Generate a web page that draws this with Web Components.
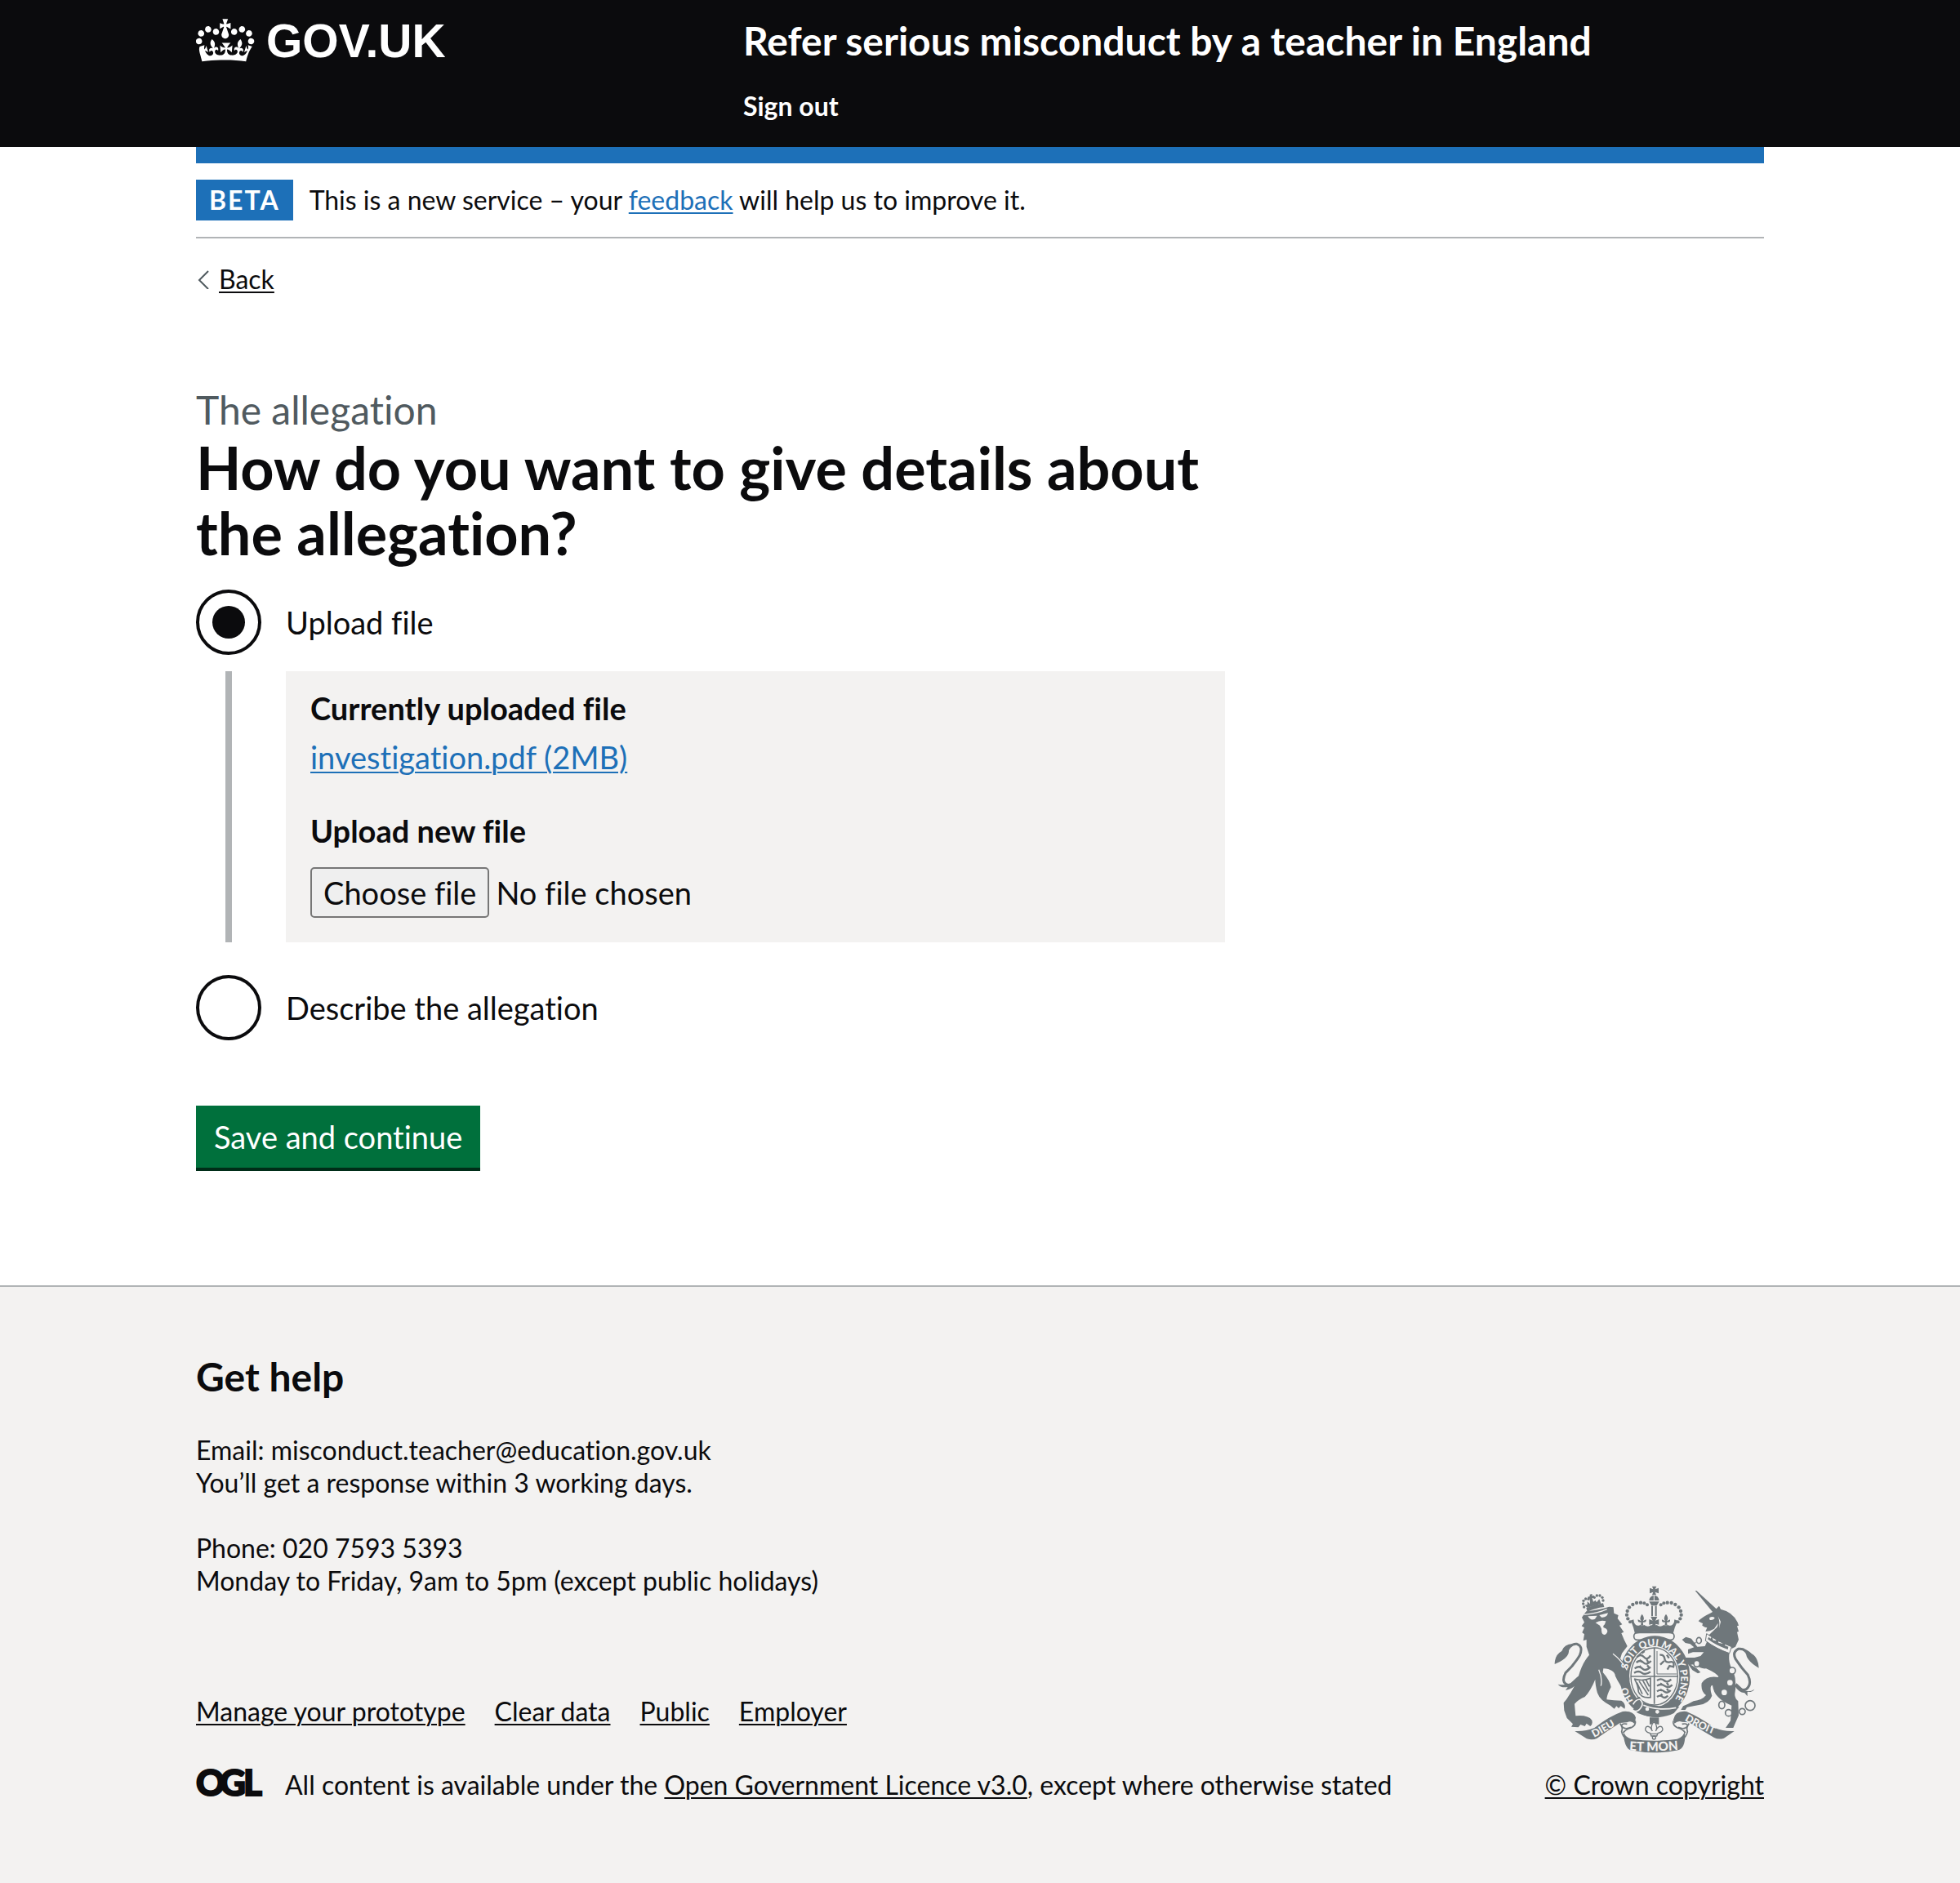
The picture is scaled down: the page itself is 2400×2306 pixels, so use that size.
<!DOCTYPE html>
<html lang="en">
<head>
<meta charset="utf-8">
<meta name="viewport" content="width=device-width, initial-scale=1">
<title>How do you want to give details about the allegation?</title>
<style>
  html { background: #fff; }
  body {
    margin: 0;
    font-family: Lato, "Liberation Sans", Arial, sans-serif;
    font-size: 32px;
    line-height: 40px;
    font-variant-ligatures: no-common-ligatures;
    color: #0b0b0d;
  }
</style>
</head>
<body>

<app-header>
  <gov-logo slot="logo"></gov-logo>
  <span slot="service">Refer serious misconduct by a teacher in England</span>
  <span slot="action">Sign out</span>
</app-header>

<page-width>
  <phase-banner tag="Beta">This is a new service – your <text-link href="#feedback">feedback</text-link> will help us to improve it.</phase-banner>
  <back-link href="#back">Back</back-link>
  <main>
    <allegation-form>
      <span slot="caption">The allegation</span>
      <span slot="heading">How do you want to give details about the allegation?</span>
    </allegation-form>
  </main>
</page-width>

<app-footer>
  <get-help slot="help"></get-help>
  <text-link slot="links" tone="dark" href="#manage">Manage your prototype</text-link>
  <text-link slot="links" tone="dark" href="#clear">Clear data</text-link>
  <text-link slot="links" tone="dark" href="#public">Public</text-link>
  <text-link slot="links" tone="dark" href="#employer">Employer</text-link>
  <ogl-logo slot="licence-logo"></ogl-logo>
  <span slot="licence">All content is available under the <text-link tone="dark" href="#ogl">Open Government Licence v3.0</text-link>, except where otherwise stated</span>
  <crown-copyright slot="copyright"></crown-copyright>
</app-footer>

<script>
const define = (name, html, setup) => {
  const template = document.createElement('template');
  template.innerHTML = html;
  customElements.define(name, class extends HTMLElement {
    constructor() {
      super();
      this.attachShadow({ mode: 'open' }).append(template.content.cloneNode(true));
    }
    connectedCallback() {
      if (setup) setup(this, this.shadowRoot);
    }
  });
};

define('page-width', `
  <style>
    :host { display: block; box-sizing: border-box; max-width: 2040px; margin: 0 auto; padding: 0 60px; }
  </style>
  <slot></slot>`);

define('text-link', `
  <style>
    :host { display: inline; }
    a { color: #1d70b8; text-decoration: underline; text-decoration-thickness: 2px; text-underline-offset: 3px; }
    :host([tone="dark"]) a { color: #0b0b0d; }
  </style>
  <a><slot></slot></a>`,
  (el, root) => { root.querySelector('a').href = el.getAttribute('href'); });

define('gov-logo', `
  <style>
    :host { display: block; }
    a { display: flex; align-items: center; gap: 14px; color: #fff; text-decoration: none; height: 60px;
        font: 700 57px/60px "Liberation Sans", Arial, sans-serif; }
    svg { display: block; flex: none; width: 72px; height: 54px; fill: #fff; }
  </style>
  <a href="#home">
    <svg viewBox="0 4 36 27" aria-hidden="true">
      <path d="M6.7 12.2c1 .4 2.1-.1 2.5-1s-.1-2.1-1-2.5c-1-.4-2.1.1-2.5 1-.4 1 0 2.1 1 2.5m-4.3 2.5c1 .4 2.1-.1 2.5-1s-.1-2.1-1-2.5c-1-.4-2.1.1-2.5 1-.5 1 0 2.1 1 2.5m-1.3 4.8c1 .4 2.1-.1 2.5-1s-.1-2.1-1-2.5c-1-.4-2.1.1-2.5 1-.4 1 0 2.1 1 2.5m10.4-5.8c1 .4 2.1-.1 2.5-1s-.1-2.1-1-2.5c-1-.4-2.1.1-2.5 1s0 2.1 1 2.5m17.4-1.5c-1 .4-2.1-.1-2.5-1s.1-2.1 1-2.5c1-.4 2.1.1 2.5 1 .5 1 0 2.1-1 2.5m4.3 2.5c-1 .4-2.1-.1-2.5-1s.1-2.1 1-2.5c1-.4 2.1.1 2.5 1 .5 1 0 2.1-1 2.5m1.3 4.8c-1 .4-2.1-.1-2.5-1s.1-2.1 1-2.5c1-.4 2.1.1 2.5 1 .4 1 0 2.1-1 2.5m-10.4-5.8c-1 .4-2.1-.1-2.5-1s.1-2.1 1-2.5c1-.4 2.1.1 2.5 1s0 2.1-1 2.5m-5.3-4.8 2.4 1.3V6.5l-2.4.8c-.1-.1-.1-.2-.2-.2s1-3 1-3h-3.4l1 3c-.1.1-.2.1-.2.2-.1.1-2.4-.7-2.4-.7v3.5L17 8.8c-.1.1 0 .2.1.3l-1.4 4.2c-.1.2-.1.4-.1.6 0 1.1.8 2 1.9 2.2h.7c1-.2 1.9-1.1 1.9-2.1 0-.2 0-.4-.1-.6l-1.4-4.2c-.1-.2 0-.2.2-.3m-1 20.3c4.6 0 8.9.3 12.8.9 1.1-4.6 2.4-7.2 3.8-9.1l-2.6-.9c.3 1.3.3 1.9 0 2.7-.4-.4-.8-1.1-1.1-2.3l-1.2 4c.7-.5 1.3-.8 2-.9-1.1 2.5-2.6 3.1-3.5 3-1.1-.2-1.7-1.2-1.5-2.1.3-1.2 1.5-1.5 2.1-.1 1.1-2.3-.8-3-2-2.3 1.9-1.9 2.1-3.5.6-5.6-2.1 1.6-2.1 3.2-1.2 5.5-1.2-1.4-3.2-.6-2.5 1.6.9-1.4 2.1-.5 1.9.8-.2 1.1-1.7 2.1-3.5 1.9-2.7-.2-2.9-2.1-2.9-3.6.7-.1 1.9.5 2.9 1.9l.4-4.3c-1.1 1.1-2.1 1.4-3.2 1.4.4-1.2 2.1-3 2.1-3h-5.4s1.7 1.9 2.1 3c-1.1 0-2.1-.2-3.2-1.4l.4 4.3c1-1.4 2.2-2 2.9-1.9-.1 1.5-.2 3.4-2.9 3.6-1.9.2-3.4-.8-3.5-1.9-.2-1.3 1-2.2 1.9-.8.7-2.3-1.2-3-2.5-1.6.9-2.2.9-3.9-1.2-5.5-1.5 2-1.3 3.7.6 5.6-1.2-.7-3.1 0-2 2.3.6-1.4 1.8-1.1 2.1.1.2.9-.3 1.9-1.5 2.1-.9.2-2.4-.5-3.5-3 .6 0 1.2.3 2 .9l-1.2-4c-.3 1.1-.7 1.9-1.1 2.3-.3-.8-.2-1.4 0-2.7l-2.9.9C1.3 23 2.6 25.5 3.7 30.1c4.2-.6 9.100-.9 14.100-.9"/>
    </svg>
    <span>GOV.UK</span>
  </a>`);

define('app-header', `
  <style>
    :host { display: block; background: linear-gradient(#0b0b0d, #0b0b0d) 0 0 / 100% calc(100% - 20px) no-repeat; }
    .bar { display: flex; box-sizing: border-box; border-bottom: 20px solid #1d70b8; padding: 20px 0 30px; color: #fff; }
    .logo { flex: 0 0 calc(100% / 3 + 30px); }
    .content { flex: 1; }
    a { color: inherit; text-decoration: none; font-weight: 700; }
    .service { display: block; font-size: 48px; line-height: 60px; }
    nav { margin-top: 30px; }
  </style>
  <header>
    <page-width>
      <div class="bar">
        <div class="logo"><slot name="logo"></slot></div>
        <div class="content">
          <a class="service" href="#service"><slot name="service"></slot></a>
          <nav><a href="#sign-out"><slot name="action"></slot></a></nav>
        </div>
      </div>
    </page-width>
  </header>`);

define('phase-banner', `
  <style>
    :host { display: flex; align-items: center; gap: 20px; padding: 20px 0; border-bottom: 2px solid #b1b4b6; }
    strong { background: #1d70b8; color: #fff; padding: 5px 16px; font-weight: 700; letter-spacing: 2px; text-transform: uppercase; }
  </style>
  <strong></strong><span><slot></slot></span>`,
  (el, root) => { root.querySelector('strong').textContent = el.getAttribute('tag'); });

define('back-link', `
  <style>
    :host { display: flex; margin-top: 30px; }
    a { display: flex; align-items: center; gap: 12px; color: #0b0b0d; text-decoration: none; }
    svg { width: 16px; height: 24px; fill: none; stroke: #505a5f; stroke-width: 2; }
    span { text-decoration: underline; text-decoration-thickness: 2px; text-underline-offset: 3px; }
  </style>
  <a><svg viewBox="0 0 16 24" aria-hidden="true"><path d="M15 2 4 13l11 11"/></svg><span><slot></slot></span></a>`,
  (el, root) => { root.querySelector('a').href = el.getAttribute('href'); });

define('uploaded-file', `
  <style>
    :host { display: block; background: #f3f2f1; padding: 20px 30px 30px; font-size: 38px; line-height: 50px; }
    h2, .title { display: block; margin: 0; font-size: 38px; font-weight: 700; }
    p { margin: 10px 0 40px; }
    .picker { position: relative; display: flex; align-items: center; gap: 8px; margin-top: 20px; }
    .choose { box-sizing: border-box; height: 62px; padding: 4px 14px; background: #efefef; border: 2px solid #767676; border-radius: 5px; }
    input { position: absolute; inset: 0; width: 100%; height: 100%; margin: 0; opacity: 0; }
  </style>
  <h2>Currently uploaded file</h2>
  <p><text-link href="#investigation">investigation.pdf (2MB)</text-link></p>
  <label class="title" for="new-file">Upload new file</label>
  <div class="picker">
    <label class="choose" for="new-file">Choose file</label>
    <output for="new-file">No file chosen</output>
    <input id="new-file" type="file">
  </div>`,
  (el, root) => {
    const input = root.querySelector('input');
    input.onchange = () => { root.querySelector('output').textContent = input.files.length ? input.files[0].name : 'No file chosen'; };
  });

define('allegation-form', `
  <style>
    :host { display: block; padding: 110px 0 144px; }
    form { max-width: 1260px; }
    fieldset { min-width: 0; margin: 0; padding: 0; border: 0; font-size: 38px; line-height: 50px; }
    legend { padding: 0; }
    .caption { display: block; color: #505a5f; font-size: 48px; line-height: 60px; }
    h1 { margin: 0; font-size: 72px; line-height: 80px; font-weight: 700; }
    .radios { display: flex; flex-direction: column; margin-top: 30px; }
    .item { display: flex; align-items: center; gap: 30px; }
    input { appearance: none; box-sizing: border-box; flex: none; display: grid; place-items: center; width: 80px; height: 80px; margin: 0;
      border: 4px solid #0b0b0d; border-radius: 50%; background: #fff; }
    input:checked::before { content: ""; width: 40px; height: 40px; border-radius: 50%; background: #0b0b0d; }
    .conditional { margin: 20px 0 40px 36px; padding-left: 66px; border-left: 8px solid #b1b4b6; }
    button { display: block; margin: 80px 0 0; padding: 13px 22px; border: 0; border-radius: 0; background: #00703c; color: #fff;
      box-shadow: 0 4px 0 #002d18; font: inherit; font-size: 38px; line-height: 50px; }
  </style>
  <form>
    <fieldset>
      <legend>
        <span class="caption"><slot name="caption"></slot></span>
        <h1><slot name="heading"></slot></h1>
      </legend>
      <div class="radios">
        <div class="item"><input type="radio" name="details" id="upload" checked><label for="upload">Upload file</label></div>
        <div class="conditional"><uploaded-file></uploaded-file></div>
        <div class="item"><input type="radio" name="details" id="describe"><label for="describe">Describe the allegation</label></div>
      </div>
    </fieldset>
    <button type="button">Save and continue</button>
  </form>`);

define('get-help', `
  <style>
    :host { display: block; }
    h2 { margin: 0 0 40px; font-size: 48px; line-height: 60px; font-weight: 700; }
    p { margin: 0 0 40px; }
  </style>
  <h2>Get help</h2>
  <p>Email: misconduct.teacher@education.gov.uk<br>You’ll get a response within 3 working days.</p>
  <p>Phone: 020 7593 5393<br>Monday to Friday, 9am to 5pm (except public holidays)</p>`);

define('ogl-logo', `
  <style>
    :host { display: block; }
    svg { display: block; width: 82px; height: 40px; overflow: visible; }
    text { font: 900 44px Lato, "Liberation Sans", sans-serif; fill: #0b0b0d; stroke: #0b0b0d; stroke-width: 2px; }
  </style>
  <svg viewBox="0 0 82 40" role="img" aria-label="Open Government Licence">
    <text x="0 29 58" y="33">OGL</text>
  </svg>`);

define('crown-copyright', `
  <style>
    :host { display: flex; flex-direction: column; align-items: flex-end; gap: 18px; }
    svg { display: block; width: 252px; height: 206px; margin-right: 5px; }
    .ink { fill: #6f777b; }
    .line { fill: none; stroke: #6f777b; }
    .ring { fill: #f3f2f1; stroke: #6f777b; stroke-width: 5px; }
    .cut { fill: #f3f2f1; }
    .gap { fill: none; stroke: #f3f2f1; }
    text { fill: #f3f2f1; font-family: Lato, "Liberation Sans", sans-serif; font-weight: 900; }
    .garter { font-size: 36px; }
    .side { font-size: 38px; }
    .base { font-size: 46px; }
  </style>
  <svg viewBox="70 64 756 618" aria-hidden="true">
    <defs>
      <path id="garter" d="M366 493 A100 121 0 1 1 516 478 L496 500"/>
      <path id="dieu" d="M217 622 Q260 600 322 560"/>
      <path id="mon" d="M340 668 Q437 676 540 665"/>
      <path id="droit" d="M549 558 Q600 590 690 622"/>
    </defs>

    <!-- imperial crown -->
    <path class="ink" d="M430 66h16l-5 11 13-5v20l-13-5 4 11h-15l4-11-13 5V72l13 5zM419 118q2-17 18-18t19 18zM419 122h37l-9 15h-19zM427 138h6v38h-6zM441 138h6v38h-6z"/>
    <path class="gap" stroke-width="3" d="M437 100v18"/>
    <g class="ink">
      <circle cx="412" cy="134" r="6"/><circle cx="401" cy="128" r="6"/><circle cx="388" cy="126" r="6.500"/><circle cx="373" cy="127" r="6.500"/><circle cx="359" cy="133" r="6.500"/><circle cx="346" cy="143" r="6.500"/><circle cx="339" cy="157" r="6.500"/><circle cx="337" cy="171" r="6.500"/><circle cx="341" cy="185" r="6.500"/><circle cx="349" cy="197" r="6"/>
      <circle cx="462" cy="134" r="6"/><circle cx="473" cy="128" r="6"/><circle cx="486" cy="126" r="6.500"/><circle cx="501" cy="127" r="6.500"/><circle cx="515" cy="133" r="6.500"/><circle cx="528" cy="143" r="6.500"/><circle cx="535" cy="157" r="6.500"/><circle cx="537" cy="171" r="6.500"/><circle cx="533" cy="185" r="6.500"/><circle cx="525" cy="197" r="6"/>
      <path d="M393 168q12 14 3 26l12-6q2 12-12 10l2 12h-10l2-12q-14 2-12-10l12 6q-9-12 3-26zM481 168q12 14 3 26l12-6q2 12-12 10l2 12h-10l2-12q-14 2-12-10l12 6q-9-12 3-26zM425 178h24l-7 14 13-5v20l-13-3 6 14h-22l6-14-13 3v-20l13 5z"/>
      <path d="M350 192l12-4q0 12 6 18 8 8 18 2l7 4 8-4q14 10 26 0l10 6 10-6q12 10 26 0l8 4 7-4q10 6 18-2 6-6 6-18l12 4q-12 24-17 48-70-12-140 0-5-24-15-48z"/>
    </g>
    <rect class="line" x="363" y="236" width="148" height="27" rx="13" stroke-width="5"/>

    <!-- garter and shield -->
    <ellipse class="ink" cx="440" cy="397" rx="129" ry="149"/>
    <ellipse class="cut" cx="438" cy="397" rx="92" ry="112"/>
    <ellipse class="line" cx="438" cy="397" rx="86" ry="105" stroke-width="4"/>
    <path class="line" stroke-width="5" d="M438 292v206M352 397h172"/>
    <g class="line" stroke-width="7">
      <path d="M374 326q14-14 26 0t24-6M372 346q14-12 26 0t28-6M366 368q16-12 28 0t30-6M364 384q16-10 28 0t32-4M392 312l10-8M384 336l8 8M410 334l6 12M384 358l6 8M412 356l8 10"/>
      <path stroke-width="3" d="M448 304v84h72"/><path d="M458 318q16-2 18 14t20 12 12 18l-14-4-8 14M474 340l-14 14M484 318l8 12"/>
      <path d="M448 412q14-10 26 0t26-4M448 432q14-10 28 0t28-4M448 452q14-10 26 0t24-4M448 472q12-8 20 0t20-4M460 422l8 6M484 420l6 10M460 444l6 6M484 442l6 8M462 462l6 6"/>
      <path stroke-width="5" d="M364 406q30 10 60-2v70q-34 4-44-20-2-26-14-46M382 414l34 52M396 412l22 40M408 410l12 24M374 420l20 42"/>
    </g>
    <path class="ink" d="M362 480l22-8 12 20q60 22 134 16l-20 24q-60 30-132 0l-18-14 16-14z"/>
    <path class="gap" stroke-width="5" d="M360 500q10-20 26-18 14 12 4 28-10 18-26 14M398 503q54 22 120 9"/>
    <circle class="cut" cx="412" cy="517" r="7"/><circle class="cut" cx="449" cy="527" r="7"/>

    <!-- badge under the shield -->
    <path class="ink" d="M421 548h34v26l-10-2-8-12-8 12-8 2z"/>
    <path class="line" stroke-width="4" d="M437 562q16 18 6 36 10-22 22-16 12 16-14 24l-4 10h-20l-4-10q-26-8-14-24 12-6 22 16-10-18 6-36zM424 608h26"/>
    <circle class="line" cx="437" cy="622" r="6" stroke-width="4"/>

    <!-- motto ribbon -->
    <path class="ink" d="M146 598q40 2 72-12 56-44 104-60 40-4 48 22l-4 24q-12-14-28-6l-26 2q-50 32-84 56-16 8-38 2z"/>
    <path class="line" stroke-width="5" d="M368 560q4 16-16 26-20 6-28 18M312 570q12 14 6 30 4 20 22 30M338 572q-20-4-20 8 10 14 34 4"/>
    <path class="ink" d="M732 598q-40 2-72-12-56-40-104-60-42-4-48 30l4 14q14-12 28-6l26 2q46 30 92 56 16 8 36 2z"/>
    <path class="line" stroke-width="5" d="M508 560q-4 16 16 26 20 6 28 18M566 570q-12 14-6 30-4 20-22 30M540 572q20-4 20 8-10 14-34 4"/>
    <path class="ink" d="M324 596q4 24 30 31 84 12 168 0 24-7 28-31 6 62-24 72-88 18-176 0-24-10-26-72z"/>
    <text class="side"><textPath href="#dieu">DIEU</textPath></text>
    <text class="base"><textPath href="#mon" startOffset="6">ET MON</textPath></text>
    <text class="side"><textPath href="#droit">DROIT</textPath></text>

    <!-- lion -->
    <path class="line" stroke-width="9" d="M108 320q20-46 46-42 24 8 10 42-20 34-52 64-18 36 8 44 20 2 44-28"/>
    <path class="ink" d="M72 352q0-34 26-48 10-28 44-26-18 14-18 26 2 26-52 48zM84 426q22 4 44-2l26-24 16-12-12 34q-18 20-46 26l8-12q-26 4-36-10z"/>
    <path class="ink" d="M172 180l16-22q50-6 84-17l16 2 2 22 16 7-3 12 17 22-10 4 16 24-9 4 10 24 12 24-20 26-6 20q20 22 32 46l2 30-18 18-10-8-4 14-12-20-8-16q-4-26-44-28l-2 14q26 30 30 54-16 30-16 46 26 4 54 4 18 12 12 30l-14-10-8 8-8-8-8 10-14-12q-38-18-48-46-8-30-8-50-16 40-38 64-24 10-38 26l4 44q46-4 60 16 4 16-6 22l-14-10-6 10-16-6-8 10-26-2 6-10-22-22-10-28-2-28 10-12q34-50 44-84 14-50 40-80l-10-30v-26l-12 4 4-24-8-6 8-18-10-6 10-14z"/>
    <path class="cut" d="M194 176l34-2-8 12q-16 8-26-10zM236 172l32-8q-4 18-24 16zM222 200q18-12 38-6l-4 12q-8 6-4 12 14 4 14 14-4 12-12 12-12-4-10-22l-6-12z"/>
    <path class="gap" stroke-width="4" d="M180 170q50-4 84-20M286 314q34 26 52 60M234 372q14 30 8 60"/>
    <path class="ink" d="M188 146q30-14 62-18l4 14q-34 4-62 18z"/>
    <g class="ink"><circle cx="180" cy="142" r="5"/><circle cx="177" cy="130" r="5"/><circle cx="178" cy="119" r="5"/><circle cx="186" cy="112" r="5"/><circle cx="196" cy="113" r="5"/><circle cx="218" cy="107" r="5"/><circle cx="227" cy="100" r="5"/><circle cx="238" cy="100" r="5"/><circle cx="247" cy="107" r="5"/><circle cx="250" cy="118" r="5"/>
      <path d="M201 96l9-2-1 7 8-1 1 8-8 1 4 14 8-6 4 8 10-12 6 16-50 16-10-10 10-2v-12l10 10-1-20-7 2-1-8 8-2z"/></g>

    <!-- unicorn -->
    <path class="line" stroke-width="9" d="M786 322q-12-30-40-26-22 12-10 36 22 34 46 60 16 34-6 52-18 10-38-16"/>
    <path class="ink" d="M822 366q-2-38-26-52-16-18-40-18 20 12 22 30 12 22 44 40zM806 444q-22 14-40 2l-26-24-6 10q12 22 36 26l10 12v-16q18 2 26-10z"/>
    <path class="ink" d="M588 82h5l76 70-12 14zM600 194q12-14 46-30l12-8 18-18 6 12q44 10 62 48l4 12-6 2 6 20-6 2 6 28-12 26-12 6q-40-10-88-46l26-26q10-6 10-20l-14 20-16 8-16 2 6-14-8-2-10-6 2-8-6-2z"/>
    <path class="cut" d="M640 182q12-8 20 0-4 10-18 8zM672 176l10 20-6 24q4-22-4-44z"/>
    <path class="ink" d="M632 268l82 42q-6 40 14 66 14 40 6 84-2 16 12 28l2 52-8 18-12 28h-28l18-26 4-56q-34-14-50-32-16-14-20-42-10-2-6 24l4 14q-10 28-48 34l-44 8-6 10h-16l8-14 18-8 20-10q32-4 46-22-20-14-16-44 18-30 62-22-4-14-46-32-22 2-40-16l-16 2 22 14 14 14-10 4-20-12-22-30-4-16h34l22-6 12-14h-40l-18 6v-16l22-8-14-12-18-4-12-12 14-10 20 6 22 30 28-2z"/>
    <path class="cut" stroke="#6f777b" stroke-width="3" d="M630 240q42 30 92 48l-8 24q-48-16-88-46z"/>
    <path class="ink" d="M638 252l6 6 6-8 4 14 10 2 8-12 2 20 14 2 8-10 2 18 12 4-2 10q-42-14-74-38z"/>
    <g class="ring"><ellipse cx="602" cy="265" rx="9" ry="11"/><ellipse cx="594" cy="350" rx="11" ry="12"/><circle cx="724" cy="376" r="12"/><ellipse cx="686" cy="502" rx="11" ry="14"/><circle cx="711" cy="531" r="12"/><circle cx="761" cy="526" r="11"/><circle cx="790" cy="504" r="18"/></g>
    <path class="line" stroke-width="4" d="M582 280l8-8"/>
    <circle class="cut" cx="716" cy="420" r="10"/><circle class="cut" cx="695" cy="456" r="10"/>

    <text class="garter"><textPath href="#garter" startOffset="8">HO</textPath></text>
    <text class="garter"><textPath href="#garter" startOffset="128">SOIT QUI MAL Y PENSE</textPath></text>
  </svg>
  <text-link tone="dark" href="#crown">© Crown copyright</text-link>`);

define('app-footer', `
  <style>
    :host { display: block; background: #f3f2f1; border-top: 2px solid #b1b4b6; }
    footer { padding: 80px 0 100px; }
    .meta { display: flex; flex-wrap: wrap; align-items: flex-end; justify-content: space-between; gap: 40px; }
    .help { flex: 1 1 1300px; }
    .links { display: flex; flex-wrap: wrap; gap: 36px; margin: 120px 0 50px; }
    .licence { display: flex; align-items: center; gap: 27px; }
  </style>
  <page-width>
    <footer>
      <div class="meta">
        <div class="help">
          <slot name="help"></slot>
          <div class="links"><slot name="links"></slot></div>
          <div class="licence"><slot name="licence-logo"></slot><slot name="licence"></slot></div>
        </div>
        <slot name="copyright"></slot>
      </div>
    </footer>
  </page-width>`);
</script>
</body>
</html>
